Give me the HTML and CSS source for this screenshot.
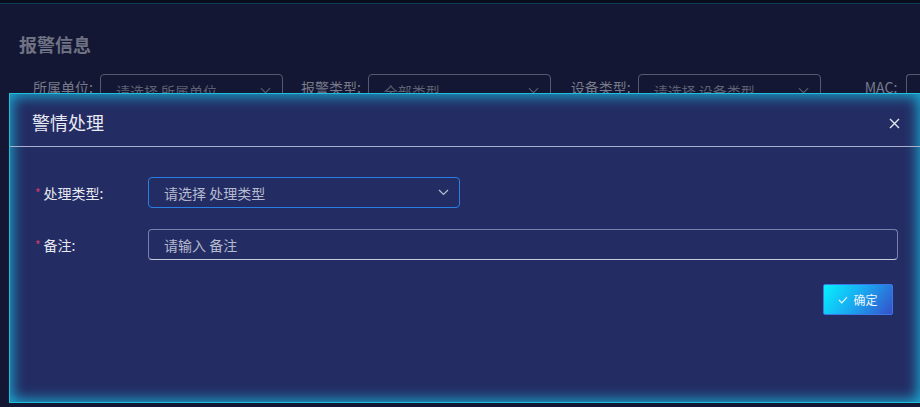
FILE: index.html
```html
<!DOCTYPE html>
<html lang="zh-CN">
<head>
	<meta charset="UTF-8">
	<title>报警信息</title>
	<link rel="stylesheet" href="styles.css">
</head>
<body>
	<div class="topbar"></div>
	<div class="main">
		<div class="side"><span class="side-active"></span></div>
		<div class="content">
			<h2 class="page-title">报警信息</h2>
			<div class="filters">
				<label class="f-label">所属单位:</label>
				<div class="f-select s1">请选择 所属单位<i class="f-arrow"></i></div>
				<label class="f-label">报警类型:</label>
				<div class="f-select s2">全部类型<i class="f-arrow"></i></div>
				<label class="f-label l3">设备类型:</label>
				<div class="f-select s3">请选择 设备类型<i class="f-arrow"></i></div>
				<label class="f-label mac">MAC:</label>
				<div class="f-select s4"></div>
			</div>
		</div>
	</div>

	<div class="dialog">
		<div class="dialog-head">
			<span class="dialog-title">警情处理</span>
			<span class="dialog-close">
				<svg width="11" height="11" viewBox="0 0 11 11"><path d="M1 1L10 10M10 1L1 10" stroke="#e4e6f0" stroke-width="1.4" fill="none"/></svg>
			</span>
		</div>
		<div class="dialog-body">
			<div class="form-row">
				<label class="form-label"><em>*</em>处理类型:</label>
				<div class="select">
					<span class="placeholder">请选择 处理类型</span>
					<svg class="chevron" width="11" height="7" viewBox="0 0 11 7"><path d="M1 1L5.5 5.5L10 1" stroke="#b9bdd2" stroke-width="1.2" fill="none"/></svg>
				</div>
			</div>
			<div class="form-row">
				<label class="form-label"><em>*</em>备注:</label>
				<div class="input"><span class="placeholder">请输入 备注</span></div>
			</div>
			<div class="dialog-foot">
				<button class="btn-ok">
					<svg width="10" height="8" viewBox="0 0 10 8"><path d="M1 4L3.8 6.8L9 1.2" stroke="#e8f4ff" stroke-width="1.2" fill="none"/></svg>
					确定
				</button>
			</div>
		</div>
	</div>
</body>
</html>
```

FILE: styles.css
```css
*{
	margin: 0;
	padding: 0;
	box-sizing: border-box;
}
body{
	width: 920px;
	height: 407px;
	overflow: hidden;
	background: #141733;
	font-family: "Noto Sans CJK SC", "Noto Sans", sans-serif;
	position: relative;
}
.topbar{
	height: 4px;
	background: #090c1a;
	border-bottom: 1px solid #0d3b5c;
}
.main{
	display: flex;
	height: 403px;
}
.side{
	width: 3px;
	background: #171b3b;
	padding-top: 62px;
}
.side-active{
	display: block;
	height: 45px;
	background: #1b3a6e;
}
.content{
	flex: 1;
	padding: 0 0 0 19px;
}
.page-title{
	margin-top: 30px;
	font-size: 18px;
	line-height: 20px;
	font-weight: bold;
	color: #6f7284;
}
.filters{
	display: flex;
	align-items: center;
	margin-top: 14px;
	height: 32px;
	white-space: nowrap;
}
.f-label{
	font-size: 14px;
	color: #767a8b;
	margin: 0 7px 0 18px;
	padding-top: 5px;
}
.f-label:first-child{
	margin-left: 14px;
}
.f-label.l3{
	margin-left: 20px;
}
.f-label.mac{
	margin-left: 44px;
	margin-right: 9px;
}
.f-select{
	position: relative;
	height: 30px;
	border: 1px solid #555a6e;
	border-radius: 4px;
	font-size: 14px;
	color: #5d6173;
	padding: 6px 0 0 15px;
	margin-top: 10px;
}
.s1{ width: 183px; }
.s2{ width: 183px; }
.s3{ width: 183px; }
.s4{ width: 30px; border-right: none; border-radius: 4px 0 0 4px; }
.f-arrow{
	position: absolute;
	right: 13px;
	top: 10px;
	width: 7px;
	height: 7px;
	border-right: 1px solid #5d6173;
	border-bottom: 1px solid #5d6173;
	transform: rotate(45deg);
}

.dialog{
	position: absolute;
	left: 9px;
	top: 93px;
	width: 911px;
	height: 310px;
	background: #232c63;
	border: 1px solid #1ebfdc;
	border-right: none;
	box-shadow: inset 0 0 14px 2px #1aaed4;
	color: #e6e8f2;
}
.dialog-head{
	display: flex;
	justify-content: space-between;
	align-items: center;
	height: 53px;
	padding: 4px 20px 0 22px;
	border-bottom: 1px solid #a9afcf;
}
.dialog-title{
	font-size: 18px;
	color: #e8eaf4;
}
.dialog-close{
	display: flex;
	padding-top: 2px;
}
.dialog-body{
	padding: 30px 22px 0 25px;
}
.form-row{
	display: flex;
	align-items: center;
	margin-bottom: 21px;
}
.form-label{
	width: 113px;
	font-size: 14px;
	color: #e6e8f2;
}
.form-label em{
	font-style: normal;
	color: #d03a6a;
	font-size: 12px;
	margin-right: 3px;
	position: relative;
	top: -1px;
}
.select,.input{
	display: flex;
	align-items: center;
	justify-content: space-between;
	height: 31px;
	border-radius: 4px;
	padding: 0 10px 0 15px;
	font-size: 14px;
}
.select{
	width: 312px;
	border: 1px solid #2b7fe2;
}
.input{
	flex: 1;
	border: 1px solid #7a80aa;
	border-bottom-color: #c8cce0;
}
.placeholder{
	color: #b6bad0;
}
.dialog-foot{
	display: flex;
	justify-content: flex-end;
	padding-right: 5px;
	margin-top: 24px;
}
.btn-ok{
	display: flex;
	align-items: center;
	gap: 5px;
	width: 70px;
	height: 31px;
	justify-content: center;
	border: 1px solid #3a78e6;
	border-radius: 2px;
	background: linear-gradient(125deg, #06f2ff 0%, #1aa6f0 50%, #3550c9 100%);
	font-family: "Noto Sans CJK SC", sans-serif;
	font-size: 12px;
	color: #eef6ff;
}
```
